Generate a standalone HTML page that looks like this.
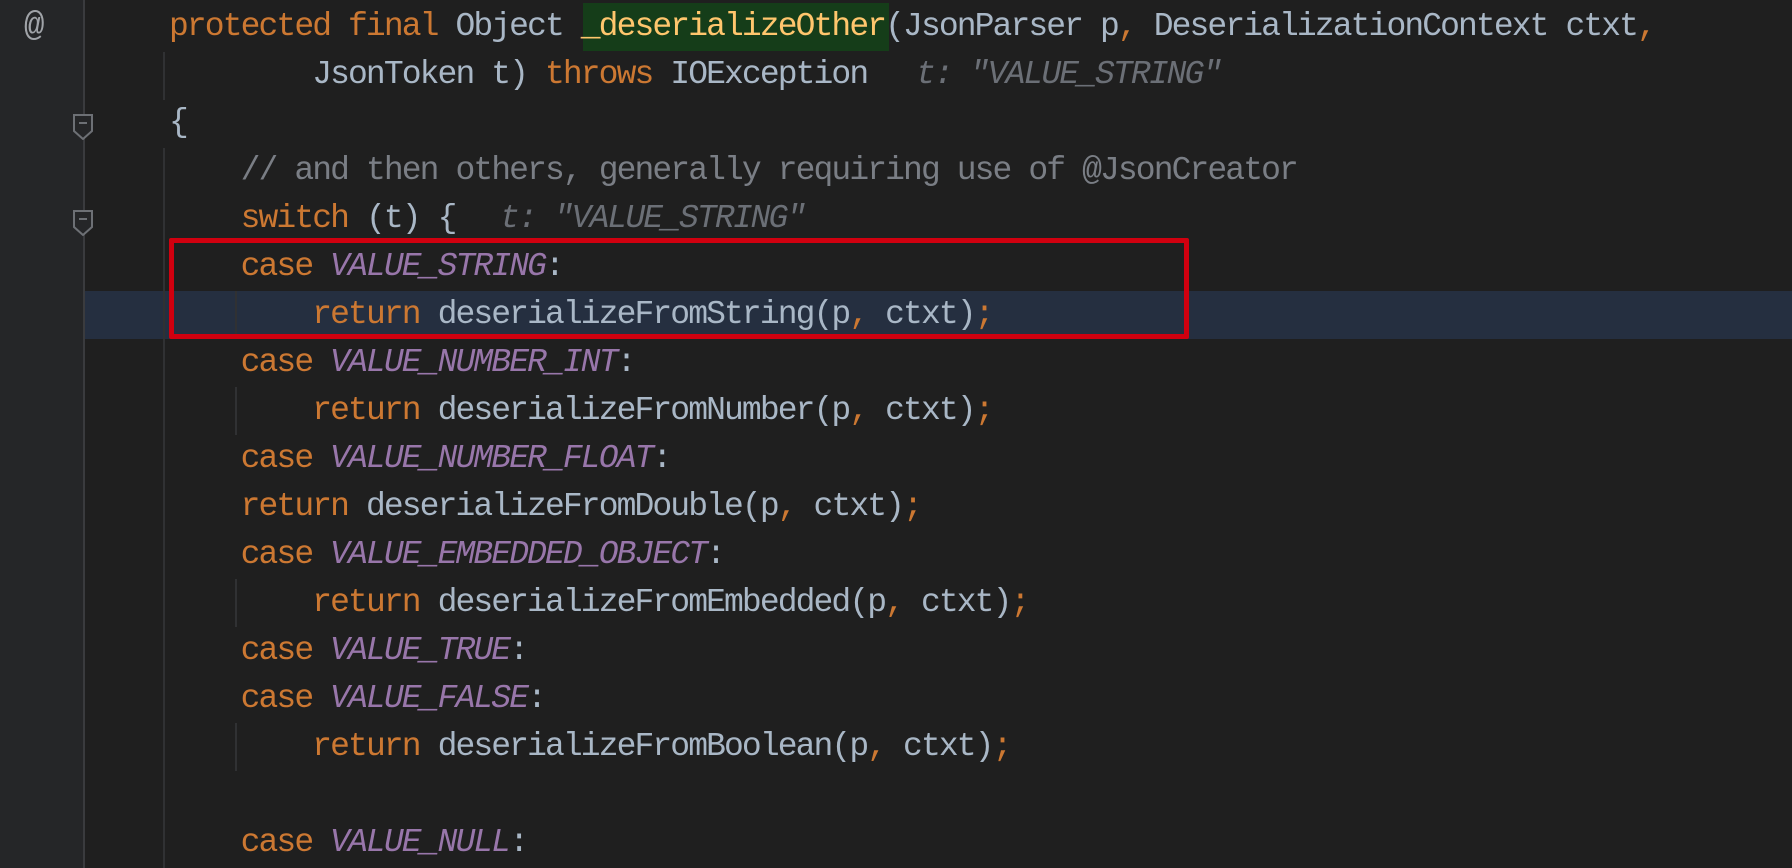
<!DOCTYPE html>
<html><head><meta charset="utf-8"><style>
body{margin:0;width:1792px;height:868px;background:#1f1f1f;overflow:hidden;position:relative;font-family:"Liberation Mono",monospace;}
.gut{position:absolute;left:0;top:0;width:83px;height:868px;background:#252628;border-right:2px solid #3a3b3e;}
.ln{position:absolute;left:169px;height:48px;line-height:48px;font-size:33px;letter-spacing:-1.9px;white-space:pre;color:#a9b7c6;}
.k{color:#cc7832}.p{color:#9876aa;font-style:italic}.c{color:#7a7e85}.m{color:#ffc66d}
.h{color:#6b6f76;font-style:italic}
.g{position:absolute;width:2px;background:#303133}
</style></head><body>
<div class="gut"></div>
<div style="position:absolute;left:85px;top:291px;width:1707px;height:48px;background:#252f40"></div>
<div style="position:absolute;left:583px;top:3px;width:306px;height:48px;background:#153d19"></div>
<div class="g" style="left:163px;top:52px;height:48px"></div>
<div class="g" style="left:163px;top:148px;height:720px"></div>
<div class="g" style="left:235px;top:291px;height:48px"></div>
<div class="g" style="left:235px;top:387px;height:48px"></div>
<div class="g" style="left:235px;top:579px;height:48px"></div>
<div class="g" style="left:235px;top:723px;height:48px"></div>
<div style="position:absolute;left:24px;top:7px;line-height:40px;font-size:34px;color:#a0a3a8;font-family:'Liberation Mono',monospace">@</div>
<svg style="position:absolute;left:72px;top:114px" width="22" height="26"><path d="M2 1H20V17L11 25L2 17Z" fill="#252628" stroke="#6d7075" stroke-width="2"/><path d="M7 9H15" stroke="#6d7075" stroke-width="2"/></svg>
<svg style="position:absolute;left:72px;top:210px" width="22" height="26"><path d="M2 1H20V17L11 25L2 17Z" fill="#252628" stroke="#6d7075" stroke-width="2"/><path d="M7 9H15" stroke="#6d7075" stroke-width="2"/></svg>
<div class="ln" style="top:3px"><span class="k">protected final </span>Object <span class="m">_deserializeOther</span>(JsonParser p<span class="k">,</span> DeserializationContext ctxt<span class="k">,</span></div>
<div class="ln" style="top:51px">        JsonToken t) <span class="k">throws </span>IOException</div>
<div class="ln h" style="top:51px;left:916px">t: "VALUE_STRING"</div>
<div class="ln" style="top:99px">{</div>
<div class="ln" style="top:147px">    <span class="c">// and then others, generally requiring use of @JsonCreator</span></div>
<div class="ln" style="top:195px">    <span class="k">switch </span>(t) {</div>
<div class="ln h" style="top:195px;left:500px">t: "VALUE_STRING"</div>
<div class="ln" style="top:243px">    <span class="k">case </span><span class="p">VALUE_STRING</span>:</div>
<div class="ln" style="top:291px">        <span class="k">return </span>deserializeFromString(p<span class="k">,</span> ctxt)<span class="k">;</span></div>
<div class="ln" style="top:339px">    <span class="k">case </span><span class="p">VALUE_NUMBER_INT</span>:</div>
<div class="ln" style="top:387px">        <span class="k">return </span>deserializeFromNumber(p<span class="k">,</span> ctxt)<span class="k">;</span></div>
<div class="ln" style="top:435px">    <span class="k">case </span><span class="p">VALUE_NUMBER_FLOAT</span>:</div>
<div class="ln" style="top:483px">    <span class="k">return </span>deserializeFromDouble(p<span class="k">,</span> ctxt)<span class="k">;</span></div>
<div class="ln" style="top:531px">    <span class="k">case </span><span class="p">VALUE_EMBEDDED_OBJECT</span>:</div>
<div class="ln" style="top:579px">        <span class="k">return </span>deserializeFromEmbedded(p<span class="k">,</span> ctxt)<span class="k">;</span></div>
<div class="ln" style="top:627px">    <span class="k">case </span><span class="p">VALUE_TRUE</span>:</div>
<div class="ln" style="top:675px">    <span class="k">case </span><span class="p">VALUE_FALSE</span>:</div>
<div class="ln" style="top:723px">        <span class="k">return </span>deserializeFromBoolean(p<span class="k">,</span> ctxt)<span class="k">;</span></div>
<div class="ln" style="top:819px">    <span class="k">case </span><span class="p">VALUE_NULL</span>:</div>
<div style="position:absolute;left:169px;top:238px;width:1010px;height:91px;border:5px solid #d0000f;border-radius:2px"></div>
</body></html>
